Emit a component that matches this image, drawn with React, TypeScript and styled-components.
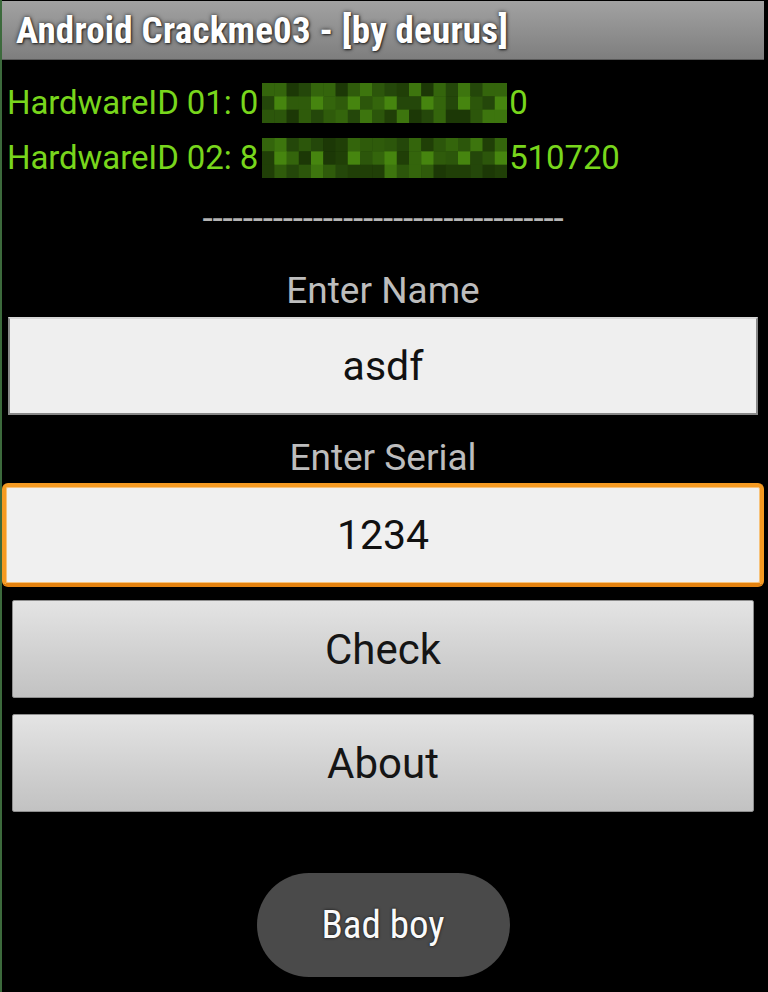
import React from "react";
import styled, { createGlobalStyle } from "styled-components";

const Global = createGlobalStyle`
  html, body { margin: 0; padding: 0; background: #000; }
  body { font-family: Roboto, "Noto Sans", Arial, sans-serif; }
  #root { width: 768px; height: 992px; background: #000; overflow: hidden; }
`;

const Screen = styled.div`
  width: 762px;
  height: 992px;
  border-left: 2px solid #3c6a3c;
  background: #000;
  display: flex;
  flex-direction: column;
`;

const TitleBar = styled.div`
  height: 59px;
  margin-top: 1px;
  background: linear-gradient(#a2a2a2, #7e7e7e);
  border-bottom: 1px solid #5a5a5a;
  display: flex;
  align-items: center;
  padding-left: 14px;
  box-sizing: border-box;
`;

const Title = styled.span`
  color: #fff;
  font-family: "Roboto Condensed", Roboto, sans-serif;
  font-weight: 700;
  font-size: 37px;
  letter-spacing: 0.2px;
  text-shadow: 0 0 4px rgba(0, 0, 0, 0.7), 1px 1px 2px rgba(0, 0, 0, 0.6);
`;

const Content = styled.div`
  display: flex;
  flex-direction: column;
  padding-top: 15px;
`;

const HwRow = styled.div`
  height: 55px;
  display: flex;
  align-items: center;
  padding-left: 5px;
  color: #78d61c;
  font-size: 33px;
  letter-spacing: -0.1px;
  white-space: nowrap;
`;

const Mosaic = styled.svg`
  display: block;
  margin: 0 2px 0 4px;
`;

const Dashes = styled.div`
  height: 40px;
  margin-top: 13px;
  display: flex;
  align-items: center;
  justify-content: center;
  color: #b4b4b4;
  font-size: 37px;
  letter-spacing: -0.2px;
`;

const Label = styled.div<{ $top: number }>`
  margin-top: ${(p) => p.$top}px;
  height: 45px;
  display: flex;
  align-items: center;
  justify-content: center;
  color: #bdbdbd;
  font-size: 37px;
`;

const NameField = styled.div`
  margin: 4px 6px 0;
  height: 98px;
  box-sizing: border-box;
  background: #efefef;
  border: 2px solid #888;
  border-top-color: #d6d6d6;
  display: flex;
  align-items: center;
  justify-content: center;
  color: #111;
  font-size: 41px;
`;

const SerialField = styled.div`
  margin: 3px 0 0 0;
  height: 104px;
  box-sizing: border-box;
  background: #f0f0f0;
  border: 4px solid #f59a22;
  border-bottom-color: #e4820f;
  border-radius: 6px;
  box-shadow: inset 0 0 0 1px #f7c27a;
  display: flex;
  align-items: center;
  justify-content: center;
  color: #111;
  font-size: 41px;
`;

const Button = styled.div<{ $top: number }>`
  margin: ${(p) => p.$top}px 10px 0;
  height: 98px;
  box-sizing: border-box;
  background: linear-gradient(#e4e4e4, #cfcfcf 60%, #c2c2c2);
  border: 1px solid #8e8e8e;
  border-radius: 2px;
  display: flex;
  align-items: center;
  justify-content: center;
  color: #151515;
  font-size: 42px;
`;

const ToastWrap = styled.div`
  margin-top: 61px;
  display: flex;
  justify-content: center;
`;

const Toast = styled.div`
  width: 253px;
  height: 104px;
  border-radius: 52px;
  background: #4a4a4a;
  display: flex;
  align-items: center;
  justify-content: center;
  color: #fafafa;
  font-family: "Roboto Condensed", Roboto, sans-serif;
  font-weight: 400;
  font-size: 39px;
  text-shadow: 0 0 3px rgba(0, 0, 0, 0.8);
`;

const greens = ["#1c3806", "#24470a", "#2c560b", "#34650c", "#3d750e", "#203f07", "#2f5b0b"];

function MosaicBlock({ seed }: { seed: number }) {
  const cols = 20;
  const rows = 3;
  const cw = 245 / cols;
  const ch = 40 / rows;
  const cells: React.ReactNode[] = [];
  let s = seed;
  for (let r = 0; r < rows; r++) {
    for (let c = 0; c < cols; c++) {
      s = (s * 9301 + 49297) % 233280;
      const idx = Math.floor((s / 233280) * greens.length);
      const col = r === 1 && c % 3 === 1 ? "#46850f" : greens[idx];
      cells.push(
        <rect key={`${r}-${c}`} x={c * cw} y={r * ch} width={cw + 0.5} height={ch + 0.5} fill={col} />
      );
    }
  }
  return (
    <Mosaic width={245} height={40} viewBox="0 0 245 40">
      {cells}
    </Mosaic>
  );
}

export default function App() {
  return (
    <>
      <Global />
      <Screen>
        <TitleBar>
          <Title>Android Crackme03 - [by deurus]</Title>
        </TitleBar>
        <Content>
          <HwRow>
            HardwareID 01: 0<MosaicBlock seed={7} />0
          </HwRow>
          <HwRow>
            HardwareID 02: 8<MosaicBlock seed={31} />510720
          </HwRow>
          <Dashes>------------------------------------</Dashes>
          <Label $top={30}>Enter Name</Label>
          <NameField>asdf</NameField>
          <Label $top={20}>Enter Serial</Label>
          <SerialField>1234</SerialField>
          <Button $top={13}>Check</Button>
          <Button $top={16}>About</Button>
        </Content>
        <ToastWrap>
          <Toast>Bad boy</Toast>
        </ToastWrap>
      </Screen>
    </>
  );
}
